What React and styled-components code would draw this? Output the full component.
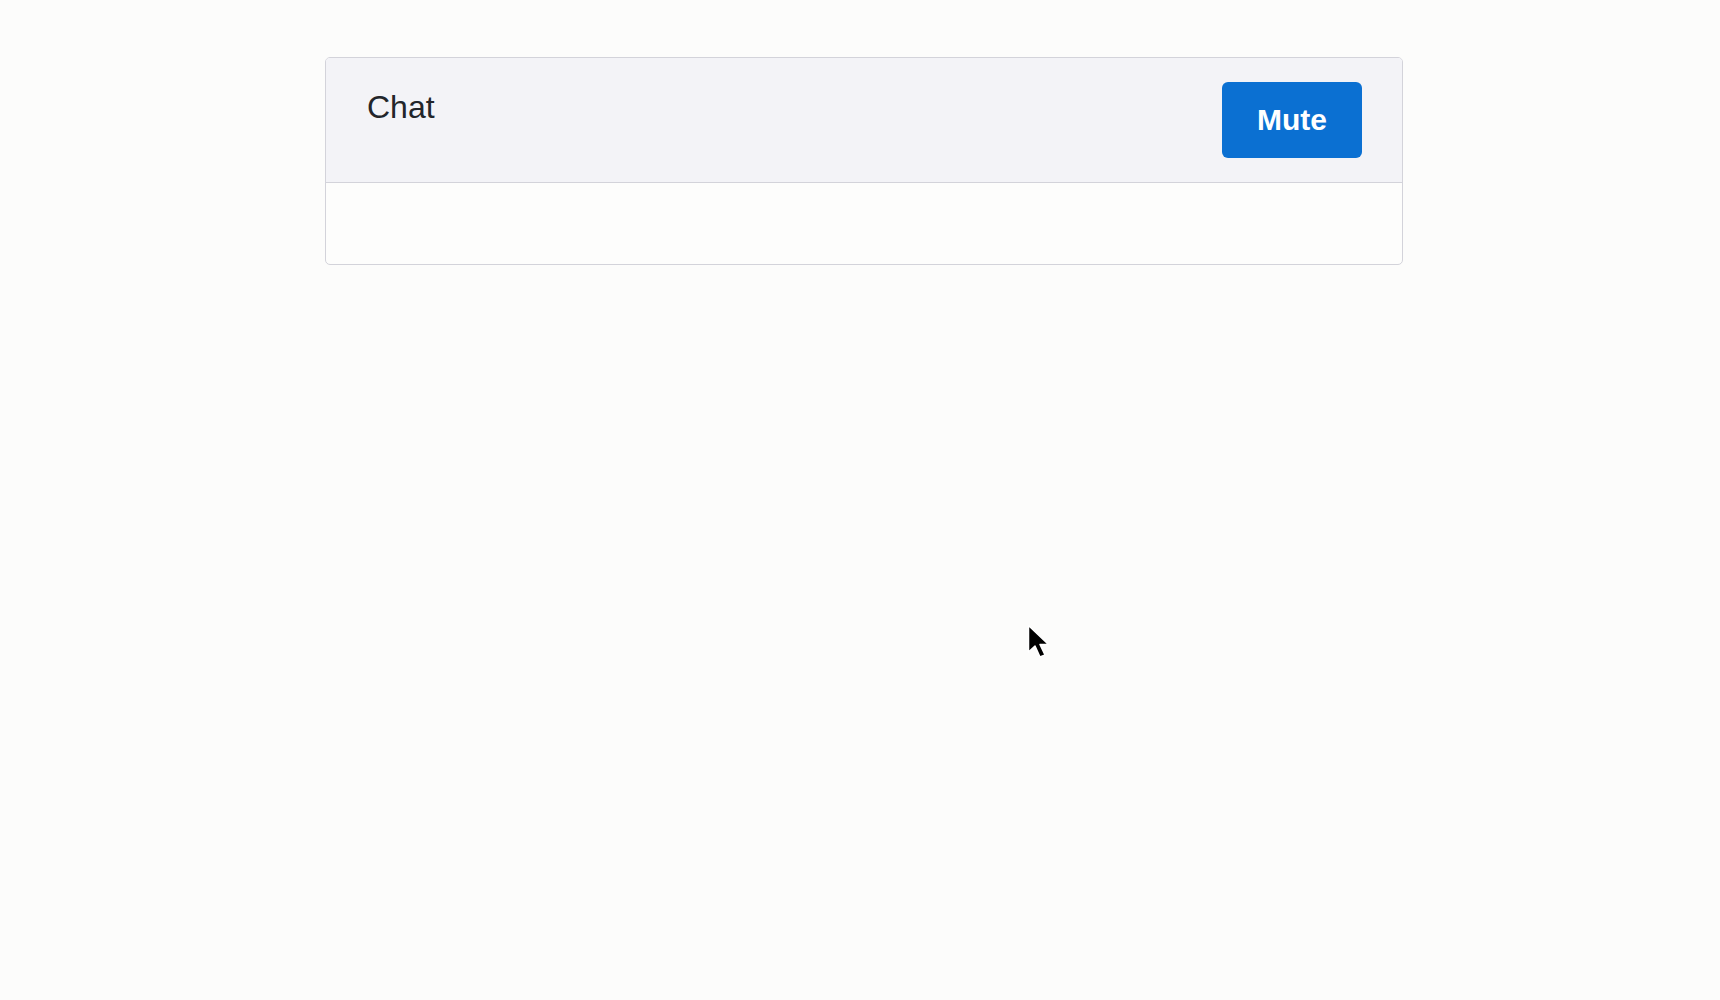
import React from 'react';
import styled, { createGlobalStyle } from 'styled-components';

const GlobalStyle = createGlobalStyle`
  html, body {
    margin: 0;
    padding: 0;
    background: #fcfcfb;
    font-family: "Liberation Sans", Arial, sans-serif;
  }
`;

const Page = styled.div`
  position: relative;
  width: 1720px;
  height: 1000px;
  padding-top: 57px;
  box-sizing: border-box;
`;

const Card = styled.div`
  width: 1078px;
  margin-left: 325px;
  border: 1px solid #d3d3da;
  border-radius: 5px;
  overflow: hidden;
  background: #fdfdfc;
  box-sizing: border-box;
`;

const Header = styled.div`
  display: flex;
  justify-content: space-between;
  align-items: flex-start;
  height: 125px;
  padding: 24px 40px 0 41px;
  background: #f3f3f7;
  border-bottom: 1px solid #d3d3da;
  box-sizing: border-box;
`;

const Title = styled.h2`
  margin: 6px 0 0;
  font-size: 32px;
  font-weight: 400;
  line-height: 38px;
  color: #22252a;
`;

const Button = styled.button`
  width: 140px;
  height: 76px;
  border: none;
  border-radius: 6px;
  background: #0b70d2;
  color: #fff;
  font-family: "Liberation Sans", Arial, sans-serif;
  font-size: 30px;
  font-weight: 700;
  cursor: pointer;
`;

const Body = styled.div`
  height: 81px;
`;

const Cursor = styled.svg`
  position: absolute;
  left: 1027px;
  top: 624px;
`;

export default function App() {
  return (
    <Page>
      <GlobalStyle />
      <Card>
        <Header>
          <Title>Chat</Title>
          <Button>Mute</Button>
        </Header>
        <Body />
      </Card>
      <Cursor width="26" height="36" viewBox="0 0 26 36">
        <path d="M1.5 1.5 L1.5 28 L8 22 L13 33 L18 31 L13 20.5 L21.5 20.5 Z" fill="#000" stroke="#fff" strokeWidth="1.5" strokeLinejoin="round" />
      </Cursor>
    </Page>
  );
}
